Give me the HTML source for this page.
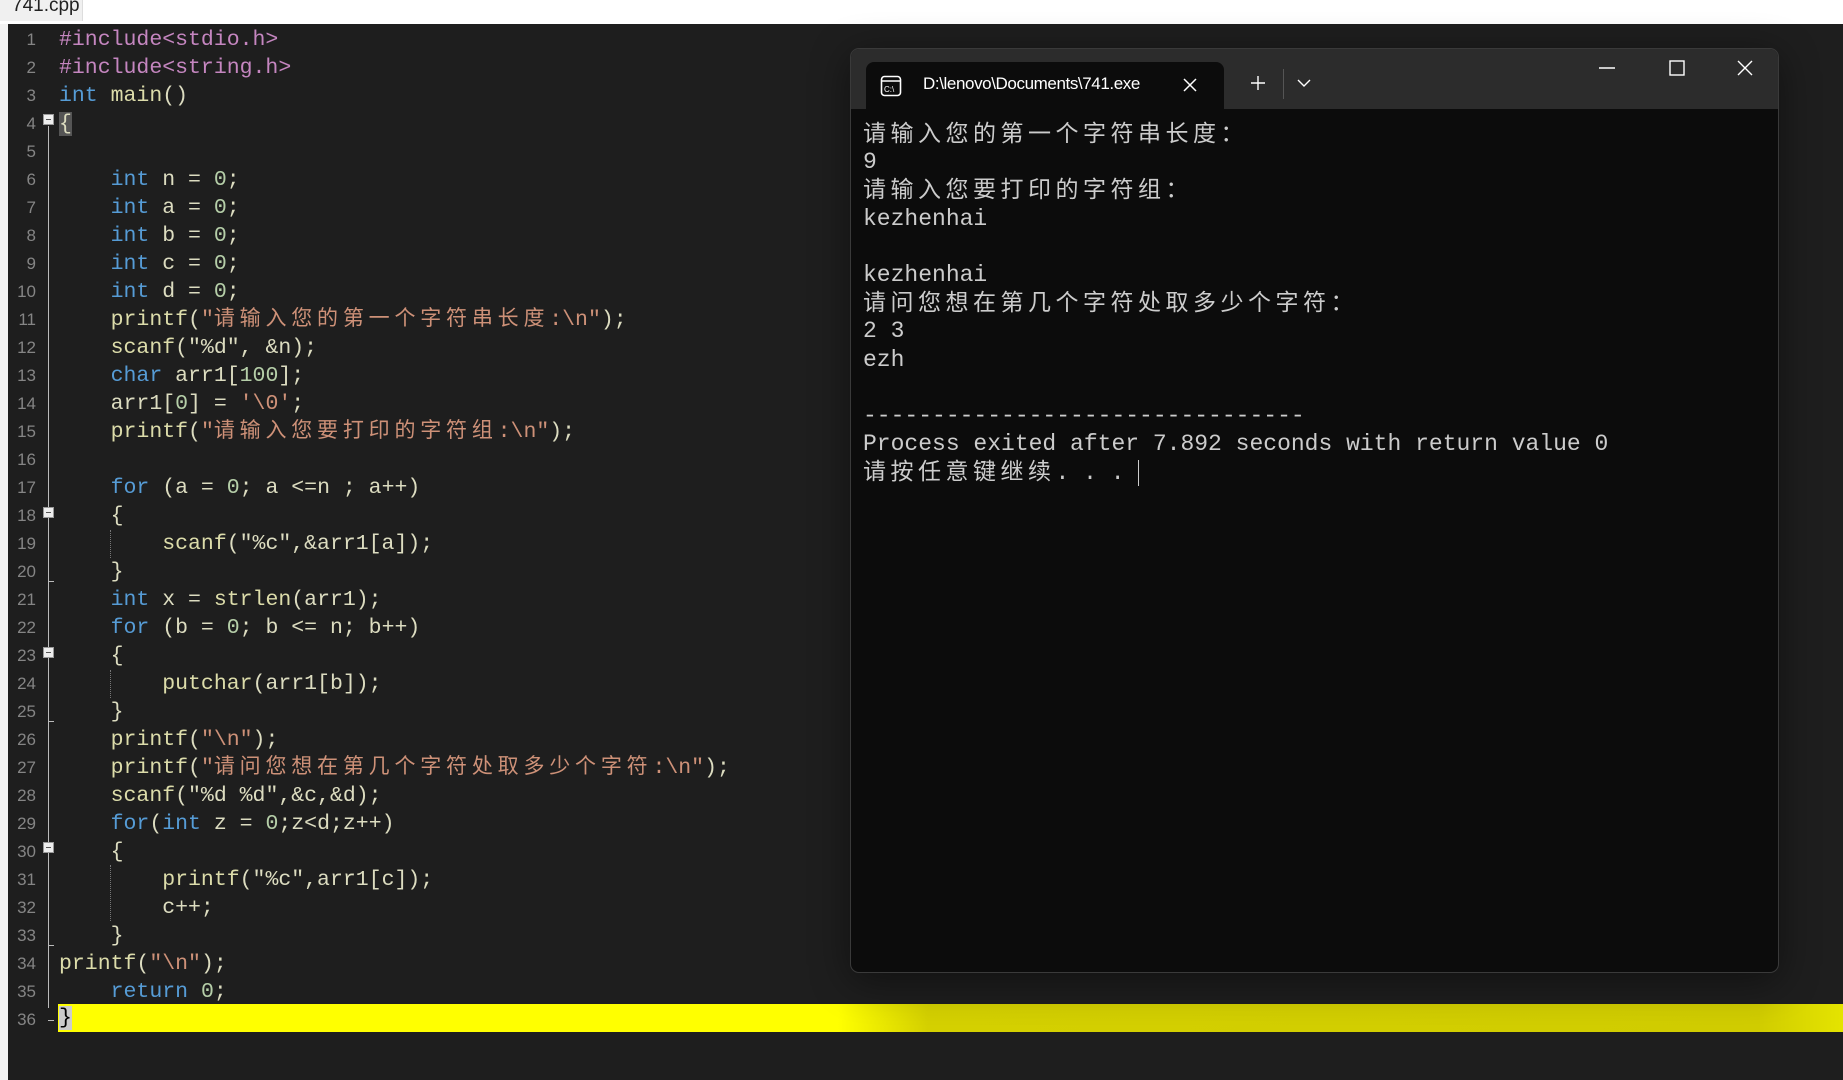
<!DOCTYPE html>
<html><head><meta charset="utf-8"><style>
*{margin:0;padding:0;box-sizing:border-box}
body{width:1843px;height:1080px;overflow:hidden;background:#1e1e1e;position:relative;font-family:"Liberation Mono","Noto Sans CJK SC",monospace}
.top{position:absolute;left:0;top:0;width:1843px;height:24px;background:#fff}
.tab{position:absolute;left:0;top:0;width:83px;height:21px;background:#f0f0f0;border-right:1px solid #ddd;font:19px "Liberation Sans",sans-serif;color:#222;line-height:12px;padding-left:12px}
.lstrip{position:absolute;left:0;top:24px;width:8px;height:1056px;background:#f3f3f3}
.ln{position:absolute;left:8px;width:28px;text-align:right;color:#858585;font-size:17px;font-family:"Liberation Sans",sans-serif;margin-top:2px}
.code{position:absolute;left:59px;white-space:pre;font-size:21.5px;color:#dcdcc0;height:28px;line-height:28px;margin-top:2px}
.k{color:#569cd6}.p{color:#c586c0}.f{color:#dcdcaa}.s{color:#ce9178}.n{color:#b5cea8}
.c{letter-spacing:4.8px;font-family:"Noto Sans CJK SC",sans-serif;font-size:21px;line-height:1}
.fold{position:absolute;left:43px;width:11px;height:11px;background:#eee;border:1px solid #999}
.fold:after{content:"";position:absolute;left:2px;top:4px;width:5px;height:1px;background:#555}
.vl{position:absolute;left:48px;width:1px;background:#bbb}
.tk{position:absolute;left:48px;width:6px;height:1px;background:#bbb}
.dot{position:absolute;left:110px;width:0;border-left:1px dotted #777}
.yel{position:absolute;left:58px;top:1004px;width:1785px;height:28px;background:linear-gradient(90deg,#ffff00 0,#ffff00 780px,#d4d000 870px,#d0cc00 1700px,#e8e800 1800px)}
.term{position:absolute;left:850px;top:48px;width:929px;height:925px;background:#0c0c0c;border:1px solid #3a3a3a;border-radius:9px;overflow:hidden;box-shadow:0 8px 40px rgba(0,0,0,.45)}
.tbar{position:absolute;left:0;top:0;width:100%;height:60px;background:#2c2c2c}
.ttab{position:absolute;left:15px;top:13px;width:358px;height:47px;background:#0c0c0c;border-radius:8px 8px 0 0}
.ttl{position:absolute;left:57px;top:12px;font:17px "Liberation Sans",sans-serif;color:#fff;white-space:nowrap;width:248px;overflow:hidden;letter-spacing:-0.4px}
.tx{position:absolute;left:12px;top:71px;color:#cccccc;font-size:23px}
.tx div{height:28.2px;line-height:28.2px;white-space:pre}
.tx .c{letter-spacing:4.5px;font-size:23px;line-height:1}
</style></head><body>
<div class="top"></div><div class="tab">741.cpp</div><div class="lstrip"></div>
<div class="yel"></div>
<div class="vl" style="top:126px;height:882px"></div>
<div class="dot" style="top:530px;height:28px"></div>
<div class="dot" style="top:670px;height:28px"></div>
<div class="dot" style="top:865px;height:56px"></div>
<div class="tk" style="top:581px"></div><div class="tk" style="top:721px"></div><div class="tk" style="top:945px"></div><div class="tk" style="top:1020px"></div>
<div class="fold" style="top:114px"></div><div class="fold" style="top:507px"></div><div class="fold" style="top:647px"></div><div class="fold" style="top:842px"></div>
<div class="ln" style="top:28px">1</div><div class="ln" style="top:56px">2</div><div class="ln" style="top:84px">3</div><div class="ln" style="top:112px">4</div><div class="ln" style="top:140px">5</div><div class="ln" style="top:168px">6</div><div class="ln" style="top:196px">7</div><div class="ln" style="top:224px">8</div><div class="ln" style="top:252px">9</div><div class="ln" style="top:280px">10</div><div class="ln" style="top:308px">11</div><div class="ln" style="top:336px">12</div><div class="ln" style="top:364px">13</div><div class="ln" style="top:392px">14</div><div class="ln" style="top:420px">15</div><div class="ln" style="top:448px">16</div><div class="ln" style="top:476px">17</div><div class="ln" style="top:504px">18</div><div class="ln" style="top:532px">19</div><div class="ln" style="top:560px">20</div><div class="ln" style="top:588px">21</div><div class="ln" style="top:616px">22</div><div class="ln" style="top:644px">23</div><div class="ln" style="top:672px">24</div><div class="ln" style="top:700px">25</div><div class="ln" style="top:728px">26</div><div class="ln" style="top:756px">27</div><div class="ln" style="top:784px">28</div><div class="ln" style="top:812px">29</div><div class="ln" style="top:840px">30</div><div class="ln" style="top:868px">31</div><div class="ln" style="top:896px">32</div><div class="ln" style="top:924px">33</div><div class="ln" style="top:952px">34</div><div class="ln" style="top:980px">35</div><div class="ln" style="top:1008px">36</div>
<div class="code" style="top:24px"><span class="p">#include&lt;stdio.h&gt;</span></div>
<div class="code" style="top:52px"><span class="p">#include&lt;string.h&gt;</span></div>
<div class="code" style="top:80px"><span class="k">int</span> <span class="f">main</span>()</div>
<div class="code" style="top:108px"><span style="background:#555">{</span></div>
<div class="code" style="top:164px">    <span class="k">int</span> n = <span class="n">0</span>;</div>
<div class="code" style="top:192px">    <span class="k">int</span> a = <span class="n">0</span>;</div>
<div class="code" style="top:220px">    <span class="k">int</span> b = <span class="n">0</span>;</div>
<div class="code" style="top:248px">    <span class="k">int</span> c = <span class="n">0</span>;</div>
<div class="code" style="top:276px">    <span class="k">int</span> d = <span class="n">0</span>;</div>
<div class="code" style="top:304px">    <span class="f">printf</span>(<span class="s">"<span class="c">请输入您的第一个字符串长度</span>:\n"</span>);</div>
<div class="code" style="top:332px">    <span class="f">scanf</span>("%d", &amp;n);</div>
<div class="code" style="top:360px">    <span class="k">char</span> arr1[<span class="n">100</span>];</div>
<div class="code" style="top:388px">    arr1[<span class="n">0</span>] = <span class="s">'\0'</span>;</div>
<div class="code" style="top:416px">    <span class="f">printf</span>(<span class="s">"<span class="c">请输入您要打印的字符组</span>:\n"</span>);</div>
<div class="code" style="top:472px">    <span class="k">for</span> (a = <span class="n">0</span>; a &lt;=n ; a++)</div>
<div class="code" style="top:500px">    {</div>
<div class="code" style="top:528px">        <span class="f">scanf</span>("%c",&amp;arr1[a]);</div>
<div class="code" style="top:556px">    }</div>
<div class="code" style="top:584px">    <span class="k">int</span> x = <span class="f">strlen</span>(arr1);</div>
<div class="code" style="top:612px">    <span class="k">for</span> (b = <span class="n">0</span>; b &lt;= n; b++)</div>
<div class="code" style="top:640px">    {</div>
<div class="code" style="top:668px">        <span class="f">putchar</span>(arr1[b]);</div>
<div class="code" style="top:696px">    }</div>
<div class="code" style="top:724px">    <span class="f">printf</span>(<span class="s">"\n"</span>);</div>
<div class="code" style="top:752px">    <span class="f">printf</span>(<span class="s">"<span class="c">请问您想在第几个字符处取多少个字符</span>:\n"</span>);</div>
<div class="code" style="top:780px">    <span class="f">scanf</span>("%d %d",&amp;c,&amp;d);</div>
<div class="code" style="top:808px">    <span class="k">for</span>(<span class="k">int</span> z = <span class="n">0</span>;z&lt;d;z++)</div>
<div class="code" style="top:836px">    {</div>
<div class="code" style="top:864px">        <span class="f">printf</span>("%c",arr1[c]);</div>
<div class="code" style="top:892px">        c++;</div>
<div class="code" style="top:920px">    }</div>
<div class="code" style="top:948px"><span class="f">printf</span>(<span class="s">"\n"</span>);</div>
<div class="code" style="top:976px">    <span class="k">return</span> <span class="n">0</span>;</div>
<div class="code" style="top:1002px;color:#000"><span style="background:#ccc">}</span></div>

<div class="term">
 <div class="tbar"></div>
 <div class="ttab">
  <svg style="position:absolute;left:14px;top:13px" width="22" height="22" viewBox="0 0 22 22"><rect x="1.5" y="1.5" width="19" height="19" rx="3" fill="none" stroke="#fff" stroke-width="1.6"/><line x1="1.5" y1="6" x2="20.5" y2="6" stroke="#fff" stroke-width="1.4"/><text x="4" y="17" font-size="8" fill="#fff" font-family="Liberation Sans">C:\</text></svg>
  <div class="ttl">D:\lenovo\Documents\741.exe</div>
  <svg style="position:absolute;left:317px;top:16px" width="14" height="14"><path d="M1 1L13 13M13 1L1 13" stroke="#fff" stroke-width="1.5"/></svg>
 </div>
 <svg style="position:absolute;left:399px;top:26px" width="16" height="16"><path d="M8 1V15M1 8H15" stroke="#fff" stroke-width="1.4"/></svg>
 <div style="position:absolute;left:432px;top:20px;width:1px;height:30px;background:#555"></div>
 <svg style="position:absolute;left:446px;top:30px" width="14" height="9"><path d="M1 1L7 7L13 1" stroke="#fff" stroke-width="1.4" fill="none"/></svg>
 <svg style="position:absolute;left:748px;top:18px" width="16" height="2"><path d="M0 1H16" stroke="#fff" stroke-width="1.4"/></svg>
 <svg style="position:absolute;left:818px;top:11px" width="16" height="16"><rect x="1" y="1" width="14" height="14" fill="none" stroke="#fff" stroke-width="1.4"/></svg>
 <svg style="position:absolute;left:886px;top:11px" width="16" height="16"><path d="M1 1L15 15M15 1L1 15" stroke="#fff" stroke-width="1.4"/></svg>
 <div class="tx">
<div><span class="c">请输入您的第一个字符串长度：</span></div>
<div>9</div>
<div><span class="c">请输入您要打印的字符组：</span></div>
<div>kezhenhai</div>
<div> </div>
<div>kezhenhai</div>
<div><span class="c">请问您想在第几个字符处取多少个字符：</span></div>
<div>2 3</div>
<div>ezh</div>
<div> </div>
<div>--------------------------------</div>
<div>Process exited after 7.892 seconds with return value 0</div>
<div><span class="c">请按任意键继续</span>. . . <span style="border-left:1.5px solid #ccc"> </span></div>
 </div>
</div>
</body></html>
